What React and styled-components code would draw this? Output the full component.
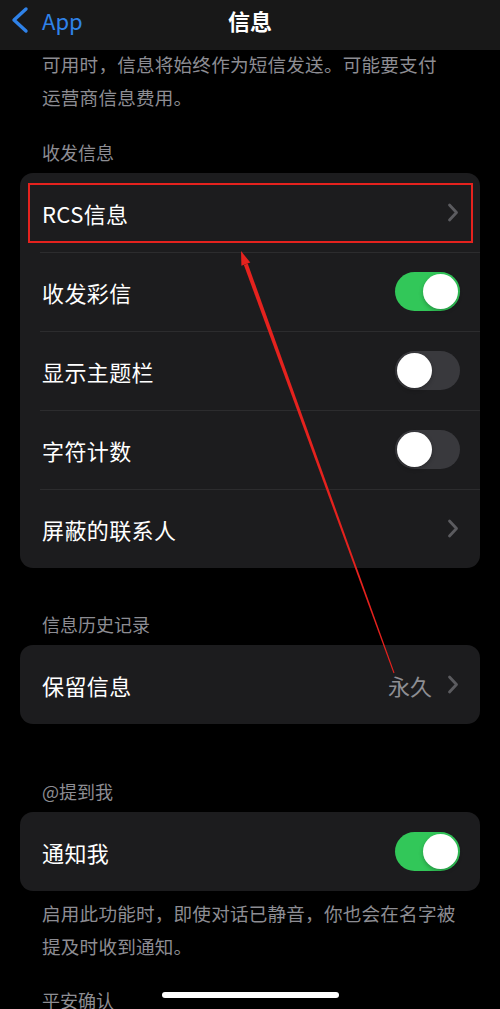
import React from "react";
import styled, { createGlobalStyle } from "styled-components";

const Global = createGlobalStyle`
  html, body { margin: 0; padding: 0; background: #000; }
  body { font-family: "Noto Sans CJK SC", "Noto Sans", sans-serif; -webkit-font-smoothing: antialiased; }
`;

const Page = styled.div`
  position: relative;
  width: 500px;
  height: 1009px;
  overflow: hidden;
  background: #000;
`;

const Nav = styled.div`
  height: 50px;
  background: #181818;
  display: grid;
  grid-template-columns: 1fr auto 1fr;
  align-items: center;
  position: relative;
  z-index: 2;
`;

const Back = styled.div`
  display: flex;
  align-items: center;
  gap: 12px;
  padding-left: 10px;
  color: #2f82e8;
  font-size: 22px;
  line-height: 28px;
  margin-top: -11px;
`;

const Title = styled.div`
  color: #fff;
  font-size: 22px;
  font-weight: 600;
  line-height: 28px;
  margin-top: -11px;
`;

const Note = styled.p`
  margin: ${(p) => p.$mt || 0}px 0 0;
  padding: 0 20px 0 42px;
  color: #8d8d93;
  font-size: 18.6px;
  line-height: 33px;
  letter-spacing: 0.2px;
  white-space: nowrap;
`;

const Header = styled.div`
  margin-top: ${(p) => p.$mt}px;
  padding: 0 42px;
  color: #8d8d93;
  font-size: 18px;
  line-height: 24px;
  margin-bottom: 9px;
  white-space: nowrap;
`;

const Card = styled.div`
  margin: 0 20px;
  background: #1c1c1e;
  border-radius: 13px;
  overflow: hidden;
`;

const Row = styled.div`
  position: relative;
  height: 79px;
  display: flex;
  align-items: center;
  padding: 0 21px 0 22px;
  &:not(:first-child)::before {
    content: "";
    position: absolute;
    top: 0;
    left: 20px;
    right: 0;
    height: 1px;
    background: #2c2c2e;
  }
`;

const Label = styled.div`
  flex: 1;
  color: #fff;
  font-size: 22px;
  line-height: 30px;
  letter-spacing: 0.4px;
`;

const Value = styled.div`
  color: #8e8e93;
  font-size: 22px;
  line-height: 30px;
  margin-right: 15px;
`;

const Track = styled.div`
  width: 65px;
  height: 39px;
  border-radius: 20px;
  background: ${(p) => (p.$on ? "#32c759" : "#39393d")};
  display: flex;
  align-items: center;
  justify-content: ${(p) => (p.$on ? "flex-end" : "flex-start")};
  padding: 0 2px;
  box-sizing: border-box;
  margin-right: -1px;
`;

const Knob = styled.div`
  width: 35px;
  height: 35px;
  border-radius: 50%;
  background: #fff;
  box-shadow: 0 2px 4px rgba(0, 0, 0, 0.25);
`;

const Highlight = styled.div`
  position: absolute;
  left: 8px;
  top: 10px;
  right: 7px;
  bottom: 9px;
  border: 2px solid #e5221e;
  pointer-events: none;
`;

const Overlay = styled.svg`
  position: absolute;
  left: 0;
  top: 0;
  pointer-events: none;
  z-index: 3;
`;

const HomeBar = styled.div`
  position: absolute;
  left: 162px;
  bottom: 11px;
  width: 177px;
  height: 6px;
  border-radius: 3px;
  background: #fff;
  z-index: 4;
`;

const Chevron = () => (
  <svg width="12" height="19" viewBox="0 0 12 19">
    <path d="M2.5 2 L9.5 9.5 L2.5 17" fill="none" stroke="#5b5b5f" strokeWidth="2.8" strokeLinecap="round" strokeLinejoin="round" />
  </svg>
);

const BackChevron = () => (
  <svg width="20" height="28" viewBox="0 0 20 28">
    <path d="M16 3 L4 14 L16 25" fill="none" stroke="#2f82e8" strokeWidth="3.4" strokeLinecap="round" strokeLinejoin="round" />
  </svg>
);

const Toggle = ({ on }) => (
  <Track $on={on}>
    <Knob />
  </Track>
);

export default function App() {
  return (
    <>
      <Global />
      <Page>
        <Nav>
          <Back>
            <BackChevron />
            <span>App</span>
          </Back>
          <Title>信息</Title>
          <div />
        </Nav>
        <Note $mt={-3}>
          可用时，信息将始终作为短信发送。可能要支付
          <br />
          运营商信息费用。
        </Note>

        <Header $mt={27}>收发信息</Header>
        <Card>
          <Row>
            <Label>RCS信息</Label>
            <Chevron />
            <Highlight />
          </Row>
          <Row>
            <Label>收发彩信</Label>
            <Toggle on />
          </Row>
          <Row>
            <Label>显示主题栏</Label>
            <Toggle />
          </Row>
          <Row>
            <Label>字符计数</Label>
            <Toggle />
          </Row>
          <Row>
            <Label>屏蔽的联系人</Label>
            <Chevron />
          </Row>
        </Card>

        <Header $mt={44}>信息历史记录</Header>
        <Card>
          <Row>
            <Label>保留信息</Label>
            <Value>永久</Value>
            <Chevron />
          </Row>
        </Card>

        <Header $mt={55}>@提到我</Header>
        <Card>
          <Row>
            <Label>通知我</Label>
            <Toggle on />
          </Row>
        </Card>
        <Note $mt={5}>
          启用此功能时，即使对话已静音，你也会在名字被
          <br />
          提及时收到通知。
        </Note>

        <Header $mt={26}>平安确认</Header>

        <Overlay width="500" height="1009" viewBox="0 0 500 1009">
          <polygon points="247.7,263.5 243.9,264.9 393.5,673.2 394.5,672.8" fill="#e5221e" />
          <polygon points="241,251 250.3,262.6 241.4,265.8" fill="#e5221e" />
        </Overlay>
        <HomeBar />
      </Page>
    </>
  );
}
